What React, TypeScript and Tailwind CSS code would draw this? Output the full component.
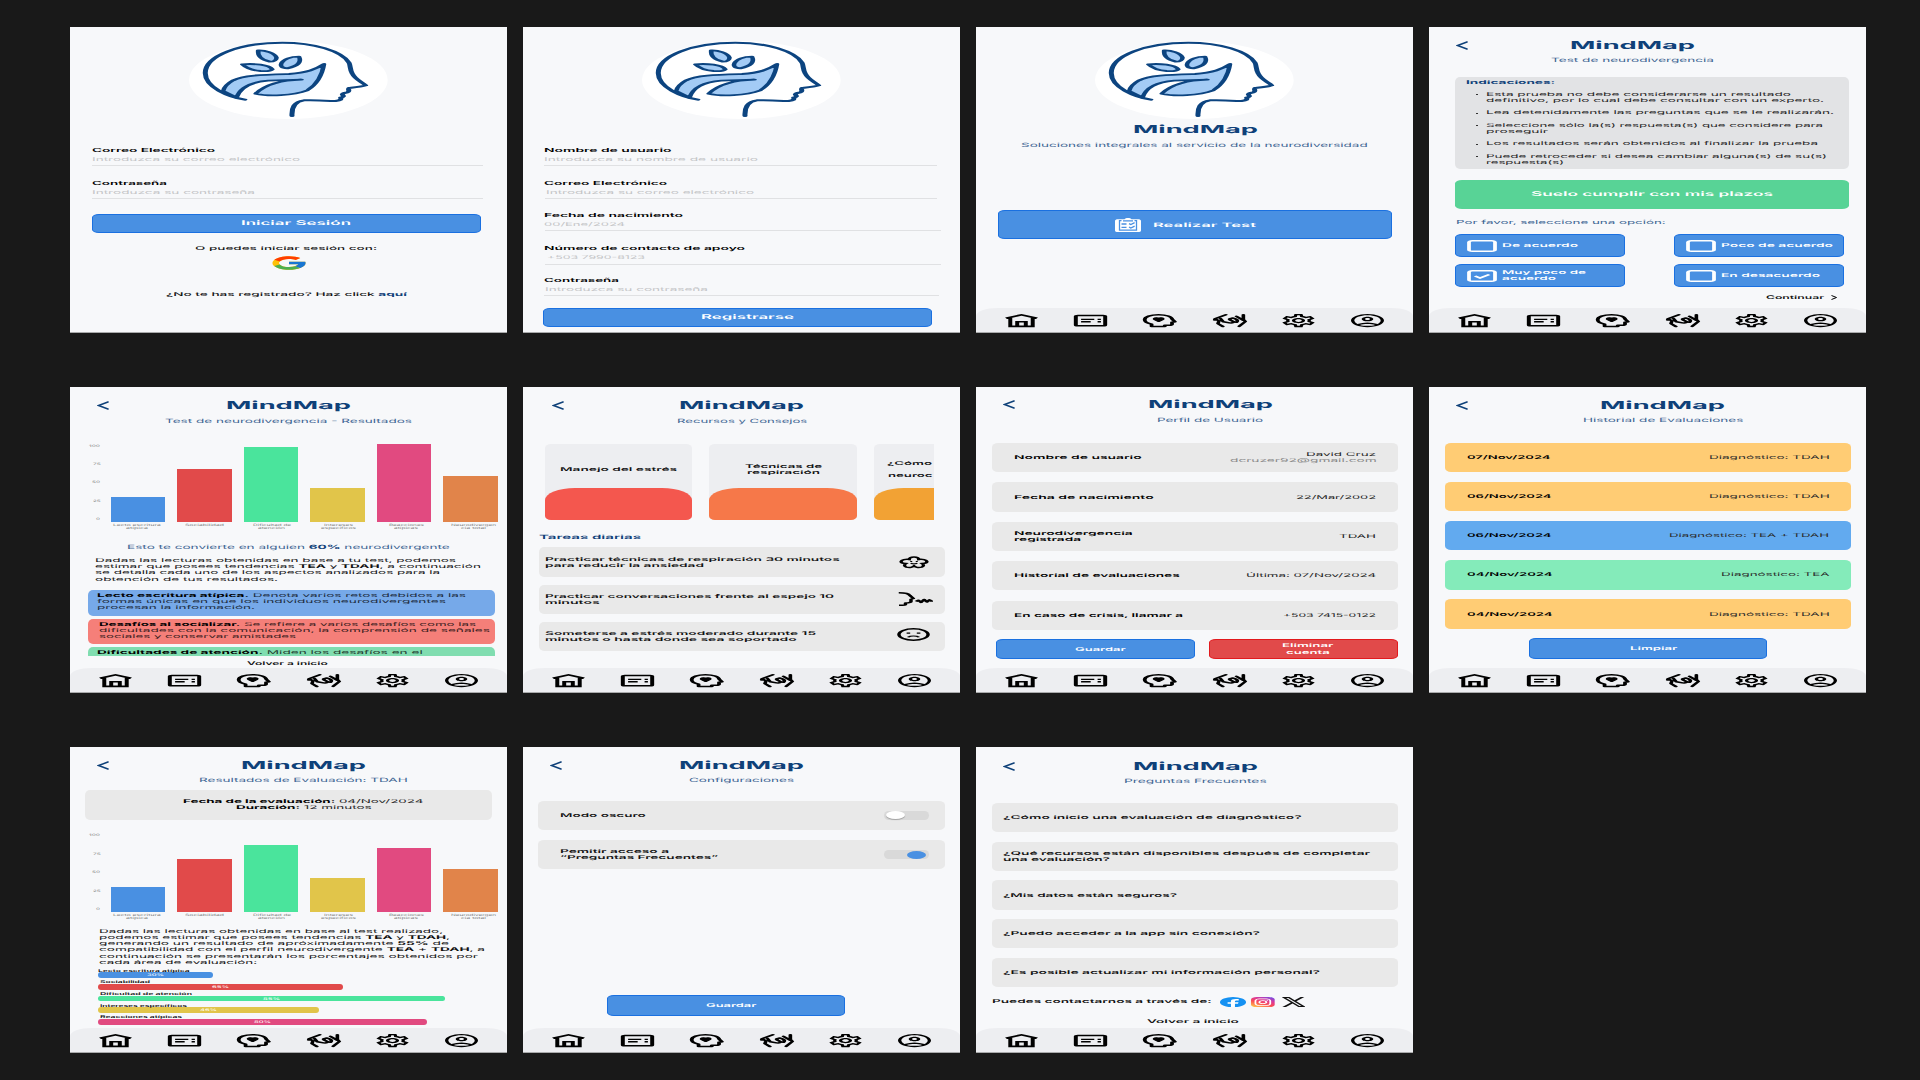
import React, { useLayoutEffect, useRef, type ReactNode } from "react";
import { MdOutlineAccountCircle, MdOutlineSettings } from "react-icons/md";
import { FcGoogle } from "react-icons/fc";
import { FaXTwitter } from "react-icons/fa6";

/* One line of extended type: the glyphs are widened until they fill the width of the box. */
function T({ className = "", children }: { className?: string; children: ReactNode }) {
  const box = useRef<HTMLDivElement>(null);
  const ink = useRef<HTMLSpanElement>(null);
  useLayoutEffect(() => {
    if (box.current && ink.current) {
      const k = box.current.getBoundingClientRect().width / ink.current.getBoundingClientRect().width;
      ink.current.style.transform = `translateY(0.35px) scale(${k}, 0.25)`;
    }
  }, []);
  const height = className.includes("h-[3.200px]") || className.includes("h-[4px]") ? "" : "h-[6.250px] ";
  return (
    <div ref={box} className={"flex shrink-0 items-center " + height + className}>
      <span ref={ink} className="block shrink-0 origin-left whitespace-nowrap leading-none [text-rendering:geometricPrecision]">
        {children}
      </span>
    </div>
  );
}

function Panel({ children, nav = true }: { children: ReactNode; nav?: boolean }) {
  return (
    <section className="flex h-[306px] w-[437px] flex-col overflow-hidden border-b border-[#a9aaab] bg-[#f7f8fa]">
      {children}
      {nav && <Nav />}
    </section>
  );
}

const ico = "h-[13.2px] w-[33px] shrink-0 overflow-visible";

function Nav() {
  return (
    <nav className="mt-auto flex h-[24px] shrink-0 items-center justify-between bg-[#edeef1] pt-[1.500px] pr-[29px] pl-[29px] text-black [border-radius:22px_22px_0_0/8px_8px_0_0]">
      <svg viewBox="2 2 20 20" preserveAspectRatio="none" className={ico} fill="none" stroke="currentColor" strokeWidth="2.4">
        <path d="M2.6 8.4 12 3.2l9.4 5.2M5.2 8v12.8h13.6V8M9.4 21v-7.2h5.2V21" />
      </svg>
      <svg viewBox="2 2 20 20" preserveAspectRatio="none" className={ico} fill="none" stroke="currentColor" strokeWidth="2.4">
        <rect x="3.1" y="4.4" width="17.8" height="15.4" rx="1.2" />
        <path d="M6.300 10.200h8M6.300 13.800h5.800M16.300 10.200h2M16.300 13.800h2" strokeWidth="2" />
      </svg>
      <svg viewBox="2 2 20 20" preserveAspectRatio="none" className={ico} fill="none" stroke="currentColor" strokeWidth="2.300" strokeLinejoin="round">
        <path d="M7.200 21v-3.600C4.500 15.800 3 13.400 3 10.600 3 6.200 6.600 3 11.400 3s8 3 8.400 7.200l1.600 3.600-1.800.8v2.800c0 1-.8 1.600-1.800 1.600h-2.600V21z" />
        <path d="M11.500 13.600 9 10.800c-.9-1.400-.4-3.200 1.100-3.300.6 0 1.200.1 1.400.4.200-.3.800-.4 1.400-.4 1.500.1 2 1.900 1.100 3.300z" fill="currentColor" strokeWidth="1.300" />
      </svg>
      <svg viewBox="2 2 20 20" preserveAspectRatio="none" className={ico} fill="none" stroke="currentColor" strokeWidth="2.200" strokeLinecap="round" strokeLinejoin="round">
        <path d="M9.800 3 3.200 9.200l2.400 3.200-.6 4.200 3 4.400M3.200 9.200l-.2 2M6.600 9l1.600 4.800 3.800 1.600c1.800.6 3.400-.8 2-2.400l-1.600-1.800c-1-1.400.2-3 1.800-2.800" />
        <path d="M20.400 3v7.200l1.200 3.200-3.800 7.400M16.200 5.500l4.200 6M13.800 8.400c2 .2 4 3.200 2.400 6.200" />
      </svg>
      <MdOutlineSettings viewBox="2 2 20 20" preserveAspectRatio="none" className={ico} />
      <MdOutlineAccountCircle viewBox="2 2 20 20" preserveAspectRatio="none" className={ico} />
    </nav>
  );
}

function Logo() {
  return (
    <svg viewBox="0 0 596 234" className="mt-[13.700px] ml-[119.300px] h-[78px] w-[198.700px] shrink-0">
      <ellipse cx="298" cy="117" rx="298" ry="117" fill="#fff" />
      <g transform="scale(2.5 1)" stroke="#0c4480" strokeWidth="6" fill="none" strokeLinecap="round" strokeLinejoin="round">
        <path
          fill="#a3cbf5"
          strokeWidth="5.500"
          d="M162 69C152 85 142 95 120 99C90 101 65 102 53 118C46 128 42 138 41 150L57 170C60 148 68 124 95 119L135 116C112 118 92 128 80 158C95 167 125 164 142 148C155 128 160 100 162 69Z"
        />
        <path d="M67 176C48 168 19.500 140 19.500 96C19.500 45 60 5 112 5C150 5 183 30 192 65C194 75 193 87 196 98C199 115 207 122 212 133C206 138 200 139 192 141C190 146 194 150 190 154C186 156 184 157 184 161C186 166 186 167 182 170C184 178 178 180 170 180C158 178 145 177 138 178C126 182 123 200 123.600 225" />
        <g fill="#a3cbf5" strokeWidth="5.500">
          <path d="M83 28C91 27 103 36 105 50C105 57 102 62 97 62C88 57 82 46 83 28Z" />
          <path d="M132 47C135 62 131 75 118 82C111 81 109 74 111 66C114 54 122 47 132 47Z" />
          <path d="M64 70C78 67 96 71 100 85C98 90 92 91 86 90C76 88 69 82 64 70Z" />
        </g>
      </g>
    </svg>
  );
}

const navy = "text-[#0f4179]";

function Header({ back = "ml-[27px]", title, sub, subBox, pad = "pt-[12px]" }: { back?: string; title: string; sub: string; subBox: string; pad?: string }) {
  return (
    <header className={"flex h-[40px] shrink-0 flex-col " + navy + " " + pad}>
      <div className="flex h-[12px] items-center">
        <div className="flex w-[39px] shrink-0">
          <svg viewBox="0 0 12 9" className={"h-[9px] w-[12px] shrink-0 " + back} fill="none" stroke="currentColor" strokeWidth="1.500">
            <path d="M11.600.8 1.600 4.500l10 3.700" />
          </svg>
        </div>
        <T className={"w-[125px] text-[44px] font-bold " + title}>MindMap</T>
      </div>
      <T className={"mt-[5.500px] text-[23px] text-[#3c6492] " + subBox}>{sub}</T>
    </header>
  );
}

function Button({ className = "", children }: { className?: string; children: ReactNode }) {
  return (
    <div className={"flex shrink-0 items-center border border-[#1a70e0] bg-[#4990e2] text-[21px] font-semibold text-white [border-radius:7px/3.500px] " + className}>
      {children}
    </div>
  );
}

function Field({ label, hint, className, labelBox, hintBox, line }: { label: string; hint: string; className: string; labelBox: string; hintBox: string; line: string }) {
  return (
    <div className={"flex shrink-0 flex-col " + className}>
      <T className={"text-[22px] font-semibold text-black " + labelBox}>{label}</T>
      <T className={"mt-[3px] text-[21px] text-[#c3c4c6] " + hintBox}>{hint}</T>
      <div className={"mt-[2.800px] h-px bg-[#e0e1e3] " + line} />
    </div>
  );
}

function Login() {
  return (
    <Panel nav={false}>
      <Logo />
      <Field className="mt-[28px] ml-[22px]" label="Correo Electrónico" hint="Introduzca su correo electrónico" labelBox="w-[123px]" hintBox="w-[208px]" line="w-[391px]" />
      <Field className="mt-[14px] ml-[22px]" label="Contraseña" hint="Introduzca su contraseña" labelBox="w-[75px]" hintBox="w-[163px]" line="w-[391px]" />
      <Button className="mt-[14.700px] ml-[21.700px] h-[19px] w-[389px]">
        <T className="ml-[148px] w-[110px] text-[26px]">Iniciar Sesión</T>
      </Button>
      <T className="mt-[12px] ml-[125.300px] w-[182px] text-[21px] font-medium">O puedes iniciar sesión con:</T>
      <FcGoogle viewBox="3.500 3.500 41 41" preserveAspectRatio="none" className="mt-[5px] ml-[201.700px] h-[14px] w-[34px] shrink-0" />
      <T className="mt-[21.300px] ml-[96px] w-[241px] text-[21px] font-medium">
        ¿No te has registrado? Haz click <span className={"font-bold " + navy}>aquí</span>
      </T>
    </Panel>
  );
}

function Register() {
  return (
    <Panel nav={false}>
      <Logo />
      <Field className="mt-[28px] ml-[21px]" label="Nombre de usuario" hint="Introduzca su nombre de usuario" labelBox="w-[127.500px]" hintBox="w-[214px]" line="w-[393px]" />
      <Field className="mt-[14px] ml-[21px]" label="Correo Electrónico" hint="Introduzca su correo electrónico" labelBox="w-[123px]" hintBox="ml-[1.500px] w-[208px]" line="ml-px w-[392px]" />
      <Field className="mt-[12.400px] ml-[21px]" label="Fecha de nacimiento" hint="00/Ene/2024" labelBox="w-[139px]" hintBox="w-[81px]" line="ml-px w-[396px]" />
      <Field className="mt-[14.300px] ml-[21px]" label="Número de contacto de apoyo" hint="+503 7990-8123" labelBox="w-[201px]" hintBox="ml-[3px] w-[98px]" line="ml-px w-[396px]" />
      <Field className="mt-[12.100px] ml-[21px]" label="Contraseña" hint="Introduzca su contraseña" labelBox="w-[75px]" hintBox="ml-px w-[163px]" line="w-[395px]" />
      <Button className="mt-[12px] ml-[20.300px] h-[19px] w-[389px]">
        <T className="ml-[156.500px] w-[93px] text-[26px]">Registrarse</T>
      </Button>
    </Panel>
  );
}

function Home() {
  return (
    <Panel>
      <Logo />
      <T className={"mt-[7.500px] ml-[156.700px] w-[125px] text-[44px] font-bold " + navy}>MindMap</T>
      <T className="mt-[8.500px] ml-[45.300px] w-[346.700px] text-[23px] text-[#3c6492]">Soluciones integrales al servicio de la neurodiversidad</T>
      <Button className="mt-[63px] ml-[22.300px] h-[29px] w-[393.300px]">
        <svg viewBox="0 0 26 14" className="ml-[116px] h-[14px] w-[26px] shrink-0">
          <path fill="#fff" d="M3 1.200h6.500C10 .5 11.500 0 13 0s3 .5 3.500 1.200H23c1.700 0 3 .7 3 1.600v9.600c0 .9-1.300 1.600-3 1.600H3c-1.700 0-3-.7-3-1.600V2.800c0-.9 1.300-1.600 3-1.600z" />
          <path fill="none" stroke="#4990e2" strokeWidth="1.300" d="M6.500 2.600h-2v9.600h17V2.600h-2M8 2.800h10M6.500 6h5M6.500 9.400h5M14 5.600l1.800 1 3.800-1.900M14 9l1.800 1 3.800-1.900" />
        </svg>
        <T className="ml-[11.500px] w-[103px] text-[24px]">Realizar Test</T>
      </Button>
    </Panel>
  );
}

function Bullet({ children }: { children: ReactNode }) {
  return (
    <li className="flex">
      <span className="mt-[2.800px] ml-[20.500px] block h-[1px] w-[2px] shrink-0 bg-[#333]" />
      <div className="ml-[8.200px] flex flex-col">{children}</div>
    </li>
  );
}

function Option({ checked, children }: { checked?: boolean; children: ReactNode }) {
  return (
    <Button className="h-[23px] w-[170px]">
      <svg viewBox="0 0 30 12" className="ml-[11px] h-[12px] w-[30px] shrink-0" fill="none" stroke="#fff">
        <g transform="scale(2.500 1)">
          <rect x=".8" y=".8" width="10.400" height="10.400" rx="1.300" strokeWidth="1.500" />
          {checked && <path d="M3.200 6l2 2 3.700-3.600" strokeWidth="1.400" />}
        </g>
      </svg>
      <div className="ml-[5px] flex flex-col">{children}</div>
    </Button>
  );
}

function Test() {
  return (
    <Panel>
      <Header title="ml-[102.300px]" sub="Test de neurodivergencia" subBox="ml-[121.700px] w-[163px]" />
      <div className="mt-[10px] ml-[26px] h-[91.700px] w-[394px] shrink-0 rounded-[5px] bg-[#e2e3e5] pt-[2px] text-[21px] text-[#222]">
        <T className={"ml-[11px] w-[89px] font-bold " + navy}>Indicaciones:</T>
        <ul className="mt-[6px] flex flex-col gap-[6.100px]">
          <Bullet>
            <T className="w-[305px]">Esta prueba no debe considerarse un resultado</T>
            <T className="w-[338px]">definitivo, por lo cual debe consultar con un experto.</T>
          </Bullet>
          <Bullet>
            <T className="w-[348px]">Lea detenidamente las preguntas que se le realizarán.</T>
          </Bullet>
          <Bullet>
            <T className="w-[337px]">Seleccione sólo la(s) respuesta(s) que considere para</T>
            <T className="w-[62px]">proseguir</T>
          </Bullet>
          <Bullet>
            <T className="w-[332px]">Los resultados serán obtenidos al finalizar la prueba</T>
          </Bullet>
          <Bullet>
            <T className="w-[341px]">Puede retroceder si desea cambiar alguna(s) de su(s)</T>
            <T className="w-[78px]">respuesta(s)</T>
          </Bullet>
        </ul>
      </div>
      <div className="mt-[11.300px] ml-[26px] flex h-[29px] w-[394px] shrink-0 items-center bg-[#58d396] text-[26px] font-semibold text-white [border-radius:7px/3.500px]">
        <T className="ml-[76px] w-[242px]">Suelo cumplir con mis plazos</T>
      </div>
      <T className="mt-[9.500px] ml-[27.300px] w-[209.700px] text-[22px] text-[#3c6492]">Por favor, seleccione una opción:</T>
      <div className="mt-[9.300px] ml-[26px] grid shrink-0 grid-cols-[170px_170px] gap-x-[49px] gap-y-[7px]">
        <Option>
          <T className="w-[76px]">De acuerdo</T>
        </Option>
        <Option>
          <T className="w-[112px]">Poco de acuerdo</T>
        </Option>
        <Option checked>
          <T className="w-[84px]">Muy poco de</T>
          <T className="w-[54px]">acuerdo</T>
        </Option>
        <Option>
          <T className="w-[99px]">En desacuerdo</T>
        </Option>
      </div>
      <div className="mt-[7.300px] ml-[336.700px] flex shrink-0 items-center text-[20px] font-semibold">
        <T className="w-[58px]">Continuar</T>
        <svg viewBox="0 0 6 5" className="ml-[7px] h-[5px] w-[6px]" fill="none" stroke="#000">
          <path d="M.5.500l5 2-5 2" />
        </svg>
      </div>
    </Panel>
  );
}

function Axis({ bars }: { bars: string[] }) {
  const colors = ["bg-[#4990e2]", "bg-[#e14a4a]", "bg-[#4ae49c]", "bg-[#e1c54a]", "bg-[#e14a80]", "bg-[#e1844a]"];
  return (
    <div className="shrink-0 text-[12.500px] text-[#7d7e80]">
      <div className="flex h-[79px]">
        <div className="flex w-[30.300px] flex-col items-end gap-[12.150px]">
          <T className="w-[11px]">100</T>
          <T className="w-[7.700px]">75</T>
          <T className="w-[8px]">50</T>
          <T className="w-[7.700px]">25</T>
          <T className="w-[4px]">0</T>
        </div>
        <div className="ml-[10.400px] flex items-end gap-[11.700px]">
          {bars.map((b, i) => (
            <div key={i} className={"w-[54.800px] " + b + " " + colors[i]} />
          ))}
        </div>
      </div>
      <div className="mt-[2px] ml-[33.400px] flex h-[6.500px] [&>div]:flex [&>div]:w-[67.300px] [&>div]:shrink-0 [&>div]:flex-col [&>div]:items-center">
        <div>
          <T className="h-[3.200px] w-[47.700px]">Lecto escritura</T>
          <T className="h-[3.200px] w-[22px]">atípica</T>
        </div>
        <div>
          <T className="h-[3.200px] w-[39px]">Sociabilidad</T>
        </div>
        <div>
          <T className="h-[3.200px] w-[38px]">Dificultad de</T>
          <T className="h-[3.200px] w-[27px]">atención</T>
        </div>
        <div>
          <T className="h-[3.200px] w-[29px]">Intereses</T>
          <T className="h-[3.200px] w-[35px]">específicos</T>
        </div>
        <div>
          <T className="h-[3.200px] w-[35px]">Reacciones</T>
          <T className="h-[3.200px] w-[24px]">atípicas</T>
        </div>
        <div>
          <T className="h-[3.200px] w-[45px]">Neurodivergen</T>
          <T className="h-[3.200px] w-[25px]">cia total</T>
        </div>
      </div>
    </div>
  );
}

function Results() {
  return (
    <Panel>
      <Header title="ml-[117.300px]" sub="Test de neurodivergencia - Resultados" subBox="ml-[95px] w-[247px]" pad="pt-[12.400px]" />
      <div className="mt-[15.700px] flex shrink-0">
        <Axis bars={["h-[25px]", "h-[52.500px]", "h-[75px]", "h-[34px]", "h-[77.500px]", "h-[46px]"]} />
      </div>
      <T className="mt-[13.300px] ml-[57.300px] w-[322.700px] text-[23px] text-[#3c6492]">
        Esto te convierte en alguien <span className={"font-bold " + navy}>60%</span> neurodivergente
      </T>
      <div className="mt-[7.400px] ml-[25px] shrink-0 text-[21px] text-[#111]">
        <T className="w-[361px]">Dadas las lecturas obtenidas en base a tu test, podemos</T>
        <T className="w-[386px]">
          estimar que posees tendencias <b>TEA</b> y <b>TDAH</b>, a continuación
        </T>
        <T className="w-[345px]">se detalla cada uno de los aspectos analizados para la</T>
        <T className="w-[183px]">obtención de tus resultados.</T>
      </div>
      <div className="mt-[7.800px] ml-[17.700px] flex h-[66px] w-[407px] shrink-0 flex-col gap-[3px] overflow-hidden text-[21px] text-[#1c2b3c]">
        <div className="h-[25.700px] shrink-0 rounded-[5px] bg-[#76a9e9] pt-[2.400px] pl-[9.300px]">
          <T className="w-[369px]">
            <b className="text-black">Lecto escritura atípica.</b> Denota varios retos debidos a las
          </T>
          <T className="w-[349px]">formas únicas en que los individuos neurodivergentes</T>
          <T className="w-[158px]">procesan la información.</T>
        </div>
        <div className="h-[25.700px] shrink-0 rounded-[5px] bg-[#f57f79] pt-[2.400px] pl-[11.300px] text-[#3b2020]">
          <T className="w-[377px]">
            <b className="text-black">Desafíos al socializar.</b> Se refiere a varios desafíos como las
          </T>
          <T className="w-[391px]">dificultades con la comunicación, la comprensión de señales</T>
          <T className="w-[197px]">sociales y conservar amistades</T>
        </div>
        <div className="h-[25.700px] shrink-0 rounded-[5px] bg-[#80ddb0] pt-[2px] pl-[9.300px] text-[#1f3a2e]">
          <T className="w-[325.700px]">
            <b className="text-black">Dificultades de atención.</b> Miden los desafíos en el
          </T>
        </div>
      </div>
      <T className="mt-[4.200px] ml-[176.700px] w-[80.700px] text-[20px] font-semibold">Volver a inicio</T>
    </Panel>
  );
}

function Topic({ tone, children }: { tone: string; children: ReactNode }) {
  return (
    <div className="flex h-[75.500px] w-[147.500px] shrink-0 flex-col overflow-hidden bg-[#edeef1] [border-radius:6px/4px]">
      <div className="flex h-[43.700px] shrink-0 flex-col items-center justify-center pt-[7px]">{children}</div>
      <div className={"grow [border-radius:30px_30px_0_0/12px_12px_0_0] " + tone} />
    </div>
  );
}

function Task({ icon, children }: { icon: ReactNode; children: ReactNode }) {
  return (
    <div className="flex h-[29.300px] shrink-0 items-center justify-between rounded-[5px] bg-[#e9e9e9] pl-[6.300px]">
      <div className="flex flex-col">{children}</div>
      {icon}
    </div>
  );
}

function Resources() {
  return (
    <Panel>
      <Header back="ml-[29px]" title="ml-[117.300px]" sub="Recursos y Consejos" subBox="ml-[153.700px] w-[130.300px]" pad="pt-[12.400px]" />
      <div className="mt-[17.300px] ml-[21.700px] flex w-[389px] shrink-0 gap-[17.100px] overflow-hidden text-[21px] font-semibold">
        <Topic tone="bg-[#f4574e]">
          <T className="w-[117px]">Manejo del estrés</T>
        </Topic>
        <Topic tone="bg-[#f67849]">
          <T className="w-[77px]">Técnicas de</T>
          <T className="w-[73px]">respiración</T>
        </Topic>
        <Topic tone="bg-[#f2a234]">
          <div className="flex w-[122px] flex-col gap-[6.200px]">
            <T className="w-[45px]">¿Cómo</T>
            <T className="ml-[1.500px] w-[44.500px]">neuroc</T>
          </div>
        </Topic>
      </div>
      <T className={"mt-[13.800px] ml-[16.300px] w-[102px] text-[23px] font-semibold " + navy}>Tareas diarias</T>
      <div className="mt-[7.600px] ml-[16px] flex w-[406px] shrink-0 flex-col gap-[7.800px] text-[20.500px] font-semibold text-[#111]">
        <Task
          icon={
            <svg viewBox="0 0 24 24" preserveAspectRatio="none" className="mr-[16px] h-[13px] w-[30px]" fill="none" stroke="#000" strokeWidth="2.700">
              <path d="M12 2c2.500 0 4 2 3.800 4.500C18.500 5.500 22 7 22.300 10c.2 2-1.300 3.600-3.800 4 1.500 2 1.500 5-.5 6.500-2.500 1.500-5 .3-6-2-1 2.300-3.500 3.500-6 2-2-1.500-2-4.500-.5-6.500-2.500-.4-4-2-3.800-4C2 7 5.500 5.500 8.200 6.500 8 4 9.500 2 12 2z" />
              <path d="M9 10h1.600M13.400 10H15M9.500 13c1.500 1.800 3.500 1.800 5 0" strokeWidth="2" />
            </svg>
          }
        >
          <T className="w-[294.700px]">Practicar técnicas de respiración 30 minutos</T>
          <T className="w-[159px]">para reducir la ansiedad</T>
        </Task>
        <Task
          icon={
            <svg viewBox="0 0 35 14" preserveAspectRatio="none" className="mr-[12px] h-[14px] w-[35px]" fill="none" stroke="#000" strokeLinejoin="round">
              <g transform="scale(2.500 1)" strokeWidth="1.400">
                <path d="M.3.800c2.200 0 4 .8 4.400 2.600L6.200 6.500l-1 .8v2.200c0 1-1 1.400-2.200 1.400v1.600c0 .6-1 .8-2.600.8" />
                <path d="M7.200 9.500l1-1.300 1 2.200 1.200-3 1.200 2.600 1-2.200.7 1.300h.7" />
              </g>
            </svg>
          }
        >
          <T className="w-[289px]">Practicar conversaciones frente al espejo 10</T>
          <T className="w-[54.700px]">minutos</T>
        </Task>
        <Task
          icon={
            <svg viewBox="0 0 24 24" preserveAspectRatio="none" className="mr-[15px] mb-[3px] h-[13px] w-[33px]" fill="none" stroke="#000" strokeWidth="2.500">
              <circle cx="12" cy="12" r="10.600" />
              <path d="M7 9.500h2.600M14.400 9.500H17M8 17c1.800-3 6.200-3 8 0" strokeWidth="2" />
            </svg>
          }
        >
          <T className="w-[271px]">Someterse a estrés moderado durante 15</T>
          <T className="w-[251.700px]">minutos o hasta donde sea soportado</T>
        </Task>
      </div>
    </Panel>
  );
}

function Row({ tone = "bg-[#e9e9e9]", children }: { tone?: string; children: ReactNode }) {
  return (
    <div className={"flex h-[29.300px] shrink-0 items-center justify-between pr-[21.700px] pl-[22px] [border-radius:6px/4px] " + tone}>
      {children}
    </div>
  );
}

function Profile() {
  return (
    <Panel>
      <Header title="ml-[132.700px]" sub="Perfil de Usuario" subBox="ml-[181px] w-[106px]" pad="pt-[11.400px]" />
      <div className="mt-[16px] ml-[15.700px] flex w-[406.300px] shrink-0 flex-col gap-[10.100px] text-[21px] text-[#222] [&_b]:font-semibold [&_b]:text-black">
        <Row>
          <T className="w-[127.700px]"><b>Nombre de usuario</b></T>
          <div className="flex flex-col items-end">
            <T className="w-[70px]">David Cruz</T>
            <T className="w-[146.700px] text-[#888]">dcruzer92@gmail.com</T>
          </div>
        </Row>
        <Row>
          <T className="w-[139.700px]"><b>Fecha de nacimiento</b></T>
          <T className="w-[80px]">22/Mar/2002</T>
        </Row>
        <Row>
          <div>
            <T className="w-[118.700px]"><b>Neurodivergencia</b></T>
            <T className="w-[67px]"><b>registrada</b></T>
          </div>
          <T className="w-[37px]">TDAH</T>
        </Row>
        <Row>
          <T className="w-[165.700px]"><b>Historial de evaluaciones</b></T>
          <T className="w-[130px]">Última: 07/Nov/2024</T>
        </Row>
        <Row>
          <T className="w-[169px]"><b>En caso de crisis, llamar a</b></T>
          <T className="w-[93px]">+503 7415-0122</T>
        </Row>
      </div>
      <div className="mt-[9px] ml-[19.700px] flex shrink-0 gap-[14.300px]">
        <Button className="h-[20.500px] w-[199.300px]">
          <T className="ml-[78px] w-[50.700px]">Guardar</T>
        </Button>
        <div className="flex h-[20.500px] w-[188.700px] flex-col items-center justify-center border border-[#e21a1e] bg-[#e14a4a] pl-[9px] text-[21px] font-semibold text-white [border-radius:7px/3.500px]">
          <T className="w-[51.300px]">Eliminar</T>
          <T className="w-[43.700px]">cuenta</T>
        </div>
      </div>
    </Panel>
  );
}

function History() {
  return (
    <Panel>
      <Header title="ml-[132.300px]" sub="Historial de Evaluaciones" subBox="ml-[154px] w-[160.300px]" />
      <div className="mt-[16px] ml-[15.700px] flex w-[406.300px] shrink-0 flex-col gap-[9.800px] text-[21px] text-[#2b2b2b] [&_b]:font-semibold [&_b]:text-black">
        <Row tone="bg-[#ffcc74]">
          <T className="w-[83.500px]"><b>07/Nov/2024</b></T>
          <T className="w-[120.700px]">Diagnóstico: TDAH</T>
        </Row>
        <Row tone="bg-[#ffcc74]">
          <T className="w-[84.500px]"><b>06/Nov/2024</b></T>
          <T className="w-[120.700px]">Diagnóstico: TDAH</T>
        </Row>
        <Row tone="bg-[#62aaef]">
          <T className="w-[84.500px]"><b>06/Nov/2024</b></T>
          <T className="w-[160px]">Diagnóstico: TEA + TDAH</T>
        </Row>
        <Row tone="bg-[#84ebba]">
          <T className="w-[85.500px]"><b>04/Nov/2024</b></T>
          <T className="w-[108.500px]">Diagnóstico: TEA</T>
        </Row>
        <Row tone="bg-[#ffcc74]">
          <T className="w-[85.500px]"><b>04/Nov/2024</b></T>
          <T className="w-[120.700px]">Diagnóstico: TDAH</T>
        </Row>
      </div>
      <Button className="mt-[9.500px] ml-[100px] h-[20.500px] w-[238px]">
        <T className="ml-[99.700px] w-[47.300px]">Limpiar</T>
      </Button>
    </Panel>
  );
}

function Meter({ label, box, bar, pct }: { label: string; box: string; bar: string; pct: string }) {
  return (
    <div className="flex h-[11.650px] shrink-0 flex-col">
      <T className={"h-[4px] text-[15px] font-semibold " + box}>{label}</T>
      <div className={"mt-[0.200px] flex h-[5.700px] shrink-0 items-center justify-center rounded-full text-[14px] font-medium text-white " + bar}>
        <T className="w-[17px]">{pct}</T>
      </div>
    </div>
  );
}

function Evaluation() {
  return (
    <Panel>
      <Header title="ml-[132px]" sub="Resultados de Evaluación: TDAH" subBox="ml-[129px] w-[208.700px]" />
      <div className="mt-[3px] ml-[15px] flex h-[29.700px] w-[406.700px] shrink-0 flex-col justify-center rounded-[5px] bg-[#e9e9e9] text-[21px] text-[#222] [&_b]:text-black">
        <T className="ml-[98.300px] w-[240.300px]"><b>Fecha de la evaluación:</b> 04/Nov/2024</T>
        <T className="ml-[150.700px] w-[135.700px]"><b>Duración:</b> 12 minutos</T>
      </div>
      <div className="mt-[12.900px] flex shrink-0">
        <Axis bars={["h-[25px]", "h-[52.500px]", "h-[67px]", "h-[34px]", "h-[64px]", "h-[43px]"]} />
      </div>
      <div className="mt-[7.900px] ml-[28.700px] shrink-0 text-[21px] text-[#111]">
        <T className="w-[344px]">Dadas las lecturas obtenidas en base al test realizado,</T>
        <T className="w-[351px]">podemos estimar que posees tendencias <b>TEA</b> y <b>TDAH</b>,</T>
        <T className="w-[350px]">generando un resultado de apróximadamente <b>55%</b> de</T>
        <T className="w-[386px]">compatibilidad con el perfil neurodivergente <b>TEA</b> + <b>TDAH</b>, a</T>
        <T className="w-[379px]">continuación se presentarán los porcentajes obtenidos por</T>
        <T className="w-[158px]">cada área de evaluación:</T>
      </div>
      <div className="mt-[2.800px] ml-[28.400px] flex h-[57px] shrink-0 flex-col">
        <Meter label="Lecto escritura atípica" box="w-[91.700px]" bar="w-[114.300px] bg-[#4990e2]" pct="30%" />
        <Meter label="Sociabilidad" box="ml-[1.600px] w-[50px]" bar="w-[245px] bg-[#e14a4a]" pct="65%" />
        <Meter label="Dificultad de atención" box="ml-[1.600px] w-[92px]" bar="w-[347px] bg-[#4ae49c]" pct="85%" />
        <Meter label="Intereses específicos" box="ml-[1.600px] w-[87px]" bar="w-[220.700px] bg-[#e1c54a]" pct="46%" />
        <Meter label="Reacciones atípicas" box="ml-[1.600px] w-[82px]" bar="w-[328.300px] bg-[#e14a80]" pct="80%" />
      </div>
    </Panel>
  );
}

function Toggle({ on }: { on?: boolean }) {
  return (
    <div className={"mr-[-5.700px] flex h-[8.700px] w-[45px] items-center rounded-full bg-[#d9d9d9] px-[2px] " + (on ? "justify-end" : "justify-start")}>
      <div className={"h-[8px] w-[19px] rounded-[50%] " + (on ? "mr-[1px] bg-[#4990e2]" : "bg-white shadow-[0_1px_1px_rgba(0,0,0,0.25)]")} />
    </div>
  );
}

function Settings() {
  return (
    <Panel>
      <Header title="ml-[117.300px]" sub="Configuraciones" subBox="ml-[166px] w-[105px]" />
      <div className="mt-[13.700px] ml-[15px] flex w-[406.700px] shrink-0 flex-col gap-[10px] text-[21px] font-semibold">
        <Row>
          <T className="w-[85.700px]">Modo oscuro</T>
          <Toggle />
        </Row>
        <Row>
          <div>
            <T className="w-[109px]">Pemitir acceso a</T>
            <T className="w-[158px]">“Preguntas Frecuentes”</T>
          </div>
          <Toggle on />
        </Row>
      </div>
      <Button className="mt-[126px] ml-[84px] h-[20.500px] w-[238px]">
        <T className="ml-[98.300px] w-[50.300px]">Guardar</T>
      </Button>
    </Panel>
  );
}

function Question({ children }: { children: ReactNode }) {
  return <div className="flex h-[29.300px] shrink-0 flex-col justify-center bg-[#e9e9e9] pl-[11px] [border-radius:6px/4px]">{children}</div>;
}

function Faq() {
  return (
    <Panel>
      <Header title="ml-[117.700px]" sub="Preguntas Frecuentes" subBox="ml-[147.700px] w-[142.700px]" pad="pt-[13px]" />
      <div className="mt-[16px] ml-[15.700px] flex w-[406.300px] shrink-0 flex-col gap-[9.400px] text-[21px] font-semibold text-[#111]">
        <Question>
          <T className="w-[298.700px]">¿Cómo inicio una evaluación de diagnóstico?</T>
        </Question>
        <Question>
          <T className="w-[367px]">¿Qué recursos están disponibles después de completar</T>
          <T className="w-[107px]">una evaluación?</T>
        </Question>
        <Question>
          <T className="w-[174px]">¿Mis datos están seguros?</T>
        </Question>
        <Question>
          <T className="w-[257px]">¿Puedo acceder a la app sin conexión?</T>
        </Question>
        <Question>
          <T className="w-[317px]">¿Es posible actualizar mi información personal?</T>
        </Question>
      </div>
      <div className="mt-[9.700px] ml-[16.300px] flex h-[10.300px] shrink-0 items-center text-[21px] font-semibold">
        <T className="w-[219.700px]">Puedes contactarnos a través de:</T>
        <svg viewBox="0 0 24 24" preserveAspectRatio="none" className="ml-[7.700px] h-[10.300px] w-[26px]">
          <circle cx="12" cy="12" r="12" fill="#1591f2" />
          <path fill="#fff" d="M16.600 15.500l.5-3.500h-3.300V9.800c0-1 .5-1.900 2-1.900h1.500V5s-1.400-.2-2.700-.2c-2.700 0-4.500 1.600-4.500 4.600V12H7v3.500h3.100V24h3.700v-8.500z" />
        </svg>
        <svg viewBox="0 0 24 24" preserveAspectRatio="none" className="ml-[5.300px] h-[10.300px] w-[23.700px]">
          <defs>
            <linearGradient id="insta" x1="0.200" y1="1" x2="0.800" y2="0">
              <stop offset="0" stopColor="#ffc24a" />
              <stop offset=".4" stopColor="#fb4b57" />
              <stop offset=".7" stopColor="#d9389a" />
              <stop offset="1" stopColor="#7a4be0" />
            </linearGradient>
          </defs>
          <rect width="24" height="24" rx="6" fill="url(#insta)" />
          <g fill="none" stroke="#fff" strokeWidth="1.800">
            <rect x="4.500" y="4.500" width="15" height="15" rx="4" />
            <circle cx="12" cy="12" r="3.600" />
          </g>
          <circle cx="16.500" cy="7.500" r="1" fill="#fff" />
        </svg>
        <FaXTwitter viewBox="30 45 452 422" preserveAspectRatio="none" className="ml-[7px] h-[10px] w-[23.500px]" />
      </div>
      <T className="mt-[11px] ml-[171.300px] w-[91.700px] text-[20px] font-semibold">Volver a inicio</T>
    </Panel>
  );
}

export default function App() {
  return (
    <main className="h-[1080px] w-[1920px] overflow-hidden bg-[#191919] pt-[27px] pl-[70px] font-['Inter',sans-serif] text-[20px] text-[#111]">
      <div className="grid grid-cols-[repeat(4,437px)] gap-x-[16px] gap-y-[54px]">
        <Login />
        <Register />
        <Home />
        <Test />
        <Results />
        <Resources />
        <Profile />
        <History />
        <Evaluation />
        <Settings />
        <Faq />
      </div>
    </main>
  );
}
